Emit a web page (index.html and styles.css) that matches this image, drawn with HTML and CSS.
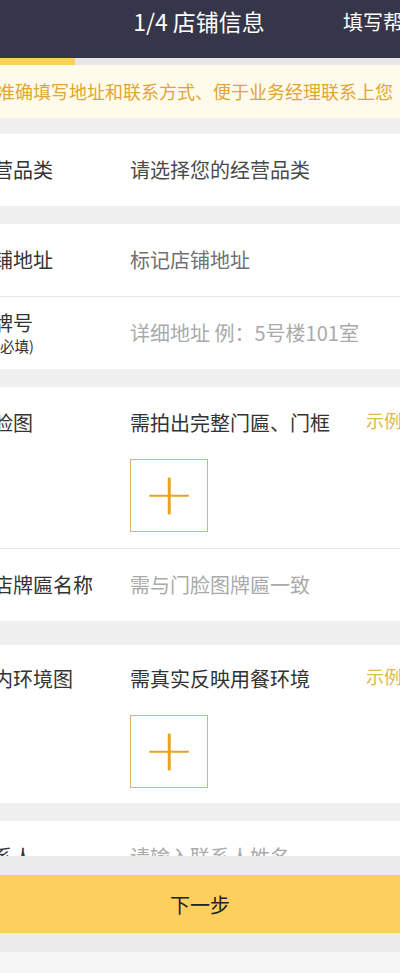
FILE: index.html
```html
<!DOCTYPE html>
<html lang="zh-CN">
<head>
  <meta charset="UTF-8">
  <meta name="viewport" content="width=device-width, initial-scale=1.0">
  <title>1/4 店铺信息</title>
  <link rel="stylesheet" href="styles.css">
</head>
<body>
<div class="screen">
  <header class="topbar">
    <span class="topbar-back"></span>
    <h1 class="topbar-title">1/4 店铺信息</h1>
    <span class="topbar-help">填写帮助</span>
  </header>
  <div class="progress"><span class="progress-done"></span></div>
  <p class="notice">请准确填写地址和联系方式、便于业务经理联系上您</p>

  <section class="group">
    <div class="row">
      <span class="label">经营品类</span>
      <span class="value value-select">请选择您的经营品类</span>
    </div>
  </section>

  <section class="group">
    <div class="row">
      <span class="label">店铺地址</span>
      <span class="value value-mark">标记店铺地址</span>
    </div>
    <div class="row">
      <span class="label">门牌号<small class="label-sub">(必填)</small></span>
      <span class="value value-hint">详细地址 例：5号楼101室</span>
    </div>
  </section>

  <section class="group">
    <div class="row row-photo">
      <span class="label">门脸图</span>
      <div class="photo">
        <div class="photo-head">
          <span class="value">需拍出完整门匾、门框</span>
          <a class="sample" href="#">示例</a>
        </div>
        <button class="upload" type="button"><span class="upload-plus"></span></button>
      </div>
    </div>
    <div class="row">
      <span class="label">门店牌匾名称</span>
      <span class="value value-hint">需与门脸图牌匾一致</span>
    </div>
  </section>

  <section class="group group-wide">
    <div class="row row-photo row-photo-short">
      <span class="label">店内环境图</span>
      <div class="photo">
        <div class="photo-head">
          <span class="value">需真实反映用餐环境</span>
          <a class="sample" href="#">示例</a>
        </div>
        <button class="upload" type="button"><span class="upload-plus"></span></button>
      </div>
    </div>
  </section>

  <section class="group">
    <div class="row">
      <span class="label">联系人</span>
      <span class="value value-hint">请输入联系人姓名</span>
    </div>
  </section>
</div>

<footer class="footer">
  <button class="next" type="button">下一步</button>
  <div class="footer-bottom"></div>
</footer>
</body>
</html>
```

FILE: styles.css
```css
/* 画面は元アプリを左右で切り取った状態なので、少し広めに取って左へずらす */
body { margin: 0; overflow-x: hidden; background: #f0f0f0; font-family: "Noto Sans CJK SC", "Noto Sans", sans-serif; color: #333; }
.screen { width: 482px; margin-left: -42px; padding-bottom: 160px; }

/* ヘッダー */
.topbar { display: grid; grid-template-columns: 1fr auto 1fr; align-items: start; height: 58px; padding-top: 7px; box-sizing: border-box; background: #35364a; color: #fff; }
.topbar-title { margin: 0; font-size: 23px; font-weight: normal; line-height: 28px; }
.topbar-help { justify-self: end; padding-right: 17px; font-size: 20px; line-height: 30px; }
.progress { height: 7px; background: #e9e7e6; }
.progress-done { display: block; width: 117px; height: 100%; background: #fcd05a; }
.notice { margin: 0; height: 53px; padding-left: 21px; background: #fffbeb; color: #e2a533; font-size: 18px; line-height: 52px; white-space: nowrap; }

/* フォーム */
.group { margin-top: 16px; background: #fff; }
.group + .group { margin-top: 18px; }
.group + .group-wide { margin-top: 24px; }
.row { display: flex; align-items: center; min-height: 72px; padding: 0 15px; }
.row + .row { border-top: 1px solid #e6e6e6; }
.label { display: flex; flex-direction: column; width: 157px; flex: none; font-size: 20px; line-height: 26px; color: #333; }
.label-sub { padding-left: 22px; font-size: 14.5px; line-height: 20px; color: #333; }
.value { font-size: 20px; line-height: 28px; color: #333; white-space: nowrap; }
.value-select { color: #4a4a4a; }
.value-mark { color: #707070; }
.value-hint { color: #aaa; }

.row-photo { align-items: flex-start; padding-top: 22px; padding-bottom: 16px; }
.row-photo-short { padding-top: 20px; padding-bottom: 15px; }
.row-photo .label { line-height: 28px; }
.photo { flex: 1; }
.photo-head { display: flex; }
.photo-head .value { width: 236px; }
.sample { margin-top: -3px; color: #e4b64c; font-size: 18px; line-height: 28px; text-decoration: none; }
.upload { position: relative; display: block; width: 78px; height: 73px; margin-top: 22px; padding: 0; border: 1.5px solid #dcb55c; background: #fff; }
.upload-plus::before,
.upload-plus::after { content: ""; position: absolute; left: 50%; top: 50%; background: #e9a321; border-radius: 1px; transform: translate(-50%, -50%); }
.upload-plus::before { width: 40px; height: 2.5px; }
.upload-plus::after { width: 2.5px; height: 37px; }

/* 下部固定ボタン */
.footer { position: fixed; left: 0; right: 0; bottom: 0; padding-top: 19px; background: #ebebeb; }
.next { display: block; width: 100%; height: 58px; border: 0; background: #fdcf5c; color: #222; font-family: inherit; font-size: 20px; }
.footer-bottom { height: 19px; border-bottom: 21px solid #f7f7f7; }
```
